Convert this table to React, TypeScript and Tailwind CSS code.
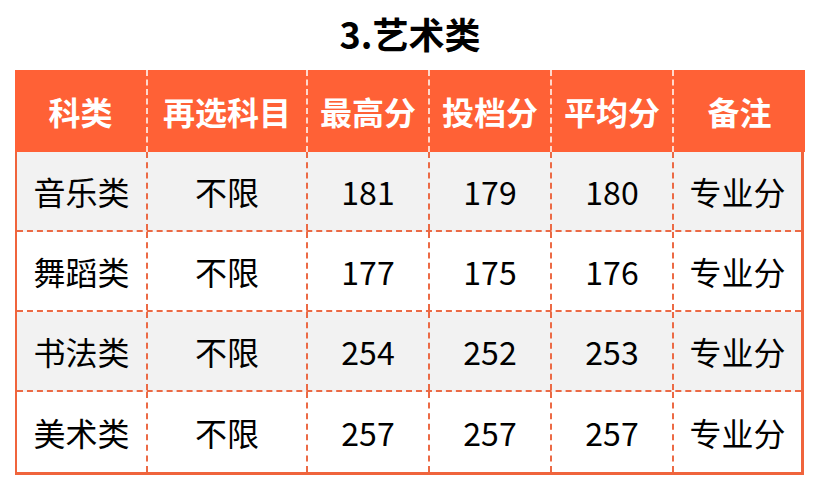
const cols = ['科类', '再选科目', '最高分', '投档分', '平均分', '备注'];

const rows = [
  ['音乐类', '不限', '181', '179', '180', '专业分'],
  ['舞蹈类', '不限', '177', '175', '176', '专业分'],
  ['书法类', '不限', '254', '252', '253', '专业分'],
  ['美术类', '不限', '257', '257', '257', '专业分'],
];

const widths = ['w-[133px]', 'w-[160px]', 'w-[122px]', 'w-[122px]', 'w-[122px]', 'flex-1'];

const font = { fontFamily: '"Microsoft YaHei", "Noto Sans CJK SC", "Noto Sans", sans-serif' };

export default function App() {
  return (
    <div className="w-[820px] h-[489px] bg-white" style={font}>
      <div className="h-[70px] flex items-center justify-center pb-[4px]">
        <h1 className="text-[36px] font-bold text-black leading-none">3.艺术类</h1>
      </div>

      <div className="ml-[15px] w-[790px]">
        {/* header */}
        <div className="flex h-[82px] bg-[#ff6136]">
          {cols.map((c, i) => (
            <div
              key={c}
              className={`${widths[i]} flex items-center justify-center text-white font-bold text-[32px] leading-none ${
                i < cols.length - 1 ? 'border-r-2 border-dashed border-[#ffd8cc]' : ''
              }`}
            >
              {c}
            </div>
          ))}
        </div>

        {/* body */}
        <div className="border-l-2 border-r-[3px] border-b-[3px] border-[#f0643c] mr-[1px]">
          {rows.map((r, ri) => (
            <div
              key={ri}
              className={`flex h-[80px] ${ri % 2 === 0 ? 'bg-[#f2f2f2]' : 'bg-white'} ${
                ri < rows.length - 1 ? 'border-b-2 border-dashed border-[#ec6a45]' : ''
              }`}
            >
              {r.map((v, ci) => (
                <div
                  key={ci}
                  className={`${ci === 0 ? 'w-[131px]' : widths[ci]} flex items-center justify-center text-black text-[32px] leading-none ${
                    ci < r.length - 1 ? 'border-r-2 border-dashed border-[#ec6a45]' : ''
                  }`}
                >
                  {v}
                </div>
              ))}
            </div>
          ))}
        </div>
      </div>
    </div>
  );
}
